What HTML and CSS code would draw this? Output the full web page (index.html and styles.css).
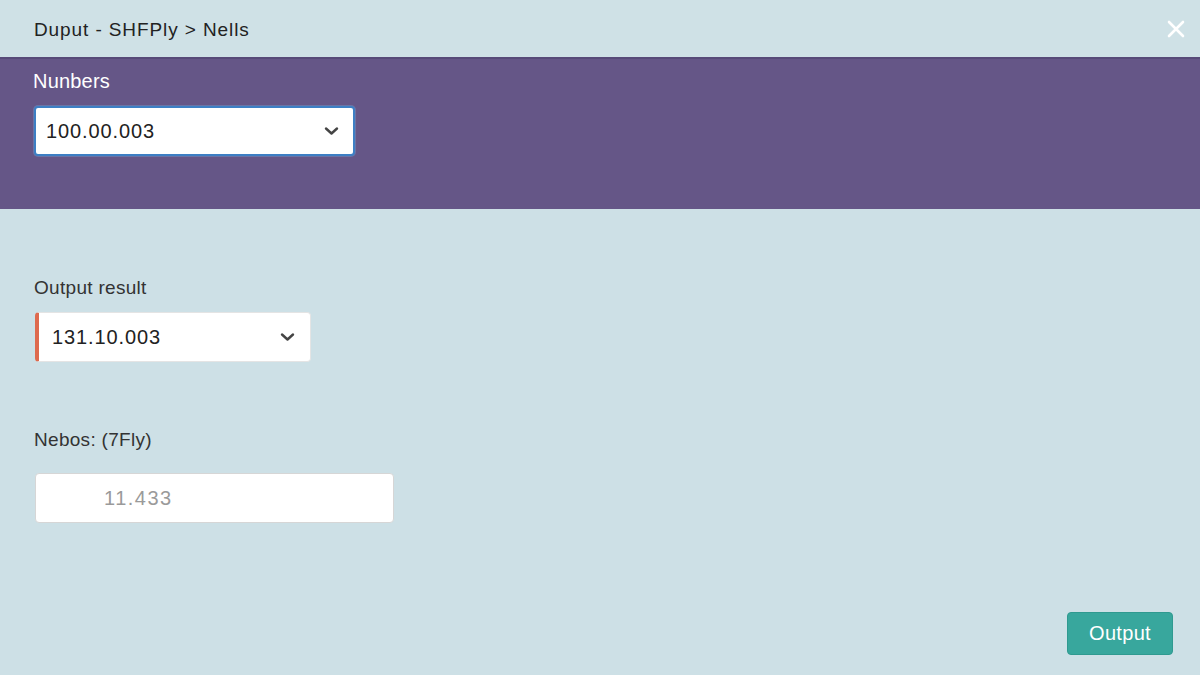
FILE: index.html
```html
<!DOCTYPE html>
<html>
<head>
<meta charset="utf-8">
<link rel="stylesheet" href="styles.css">
</head>
<body>
<div class="page">
  <header class="topbar">
    <div class="title">Duput - SHFPly &gt; Nells</div>
    <button class="close" aria-label="Close">
      <svg width="18" height="18" viewBox="0 0 18 18"><path d="M2 2 L16 16 M16 2 L2 16" stroke="#ffffff" stroke-width="2.6" stroke-linecap="round"/></svg>
    </button>
  </header>
  <section class="band">
    <label class="band-label">Nunbers</label>
    <div class="field field-focus">
      <span class="value">100.00.003</span>
      <svg class="chev" width="15" height="10" viewBox="0 0 15 10"><path d="M2 2.5 L7.5 7.5 L13 2.5" fill="none" stroke="#444" stroke-width="2.4" stroke-linecap="round" stroke-linejoin="round"/></svg>
    </div>
  </section>
  <main class="content">
    <div class="group group-result">
      <label class="label">Output result</label>
      <div class="field field-result">
        <span class="value">131.10.003</span>
        <svg class="chev" width="15" height="10" viewBox="0 0 15 10"><path d="M2 2.5 L7.5 7.5 L13 2.5" fill="none" stroke="#444" stroke-width="2.4" stroke-linecap="round" stroke-linejoin="round"/></svg>
      </div>
    </div>
    <div class="group group-nebos">
      <label class="label">Nebos: (7Fly)</label>
      <div class="field field-plain">
        <span class="value muted">11.433</span>
      </div>
    </div>
    <div class="actions">
      <button class="btn">Output</button>
    </div>
  </main>
</div>
</body>
</html>
```
FILE: styles.css
```css
* { box-sizing: border-box; }
html, body { margin: 0; padding: 0; }
body {
  width: 1200px;
  height: 675px;
  overflow: hidden;
  background: #cde0e6;
  font-family: "Liberation Sans", Arial, sans-serif;
  color: #2a2a2a;
}
.page { display: flex; flex-direction: column; height: 675px; }
.topbar {
  height: 57px;
  display: flex;
  align-items: center;
  justify-content: space-between;
  padding: 0 14px 0 34px;
  background: #cfe1e6;
}
.title { font-size: 19px; letter-spacing: 0.9px; color: #222; padding-top: 2px; }
.close {
  background: none; border: 0; padding: 0; width: 20px; height: 20px;
  display: flex; align-items: center; justify-content: center; margin-top: 1px;
}
.band {
  height: 152px;
  background: #655687;
  border-top: 2px solid #574a78;
  padding: 11px 0 0 34px;
  display: flex; flex-direction: column;
}
.band-label { color: #fff; font-size: 20px; letter-spacing: 0.2px; line-height: 22px; margin-left: -1px; }
.field {
  display: flex; align-items: center; justify-content: space-between;
  height: 50px; background: #fff; border-radius: 4px;
  font-size: 20px; letter-spacing: 0.9px; color: #222;
}
.field-focus {
  margin-top: 14px;
  width: 321px;
  border: 2px solid #3d7fc4;
  padding: 0 14px 0 10px;
  box-shadow: 0 0 0 1px rgba(120,170,220,0.35);
}
.content {
  flex: 1;
  display: flex; flex-direction: column;
  padding: 68px 27px 20px 35px;
}
.label { display: block; font-size: 19px; letter-spacing: 0.3px; color: #333; line-height: 22px; margin-left: -1px; }
.group-result .field { margin-top: 13px; }
.field-result {
  width: 276px;
  border: 1px solid #e4e4e4;
  border-left: 4px solid #de6a4e;
  padding: 0 15px 0 13px;
}
.group-nebos { margin-top: 67px; }
.group-nebos .field { margin-top: 22px; }
.field-plain {
  width: 359px;
  border: 1px solid #d6d6d6;
  padding: 0 0 0 68px;
}
.muted { color: #9a9a9a; letter-spacing: 1.5px; }
.actions { flex: 1; display: flex; justify-content: flex-end; align-items: flex-end; }
.btn {
  width: 106px; height: 43px;
  background: #38a79d;
  color: #fff;
  border: 1px solid #2f9a90;
  border-radius: 4px;
  font-family: "Liberation Sans", Arial, sans-serif;
  font-size: 20px;
  letter-spacing: 0.3px;
  margin-bottom: 0;
}
```
